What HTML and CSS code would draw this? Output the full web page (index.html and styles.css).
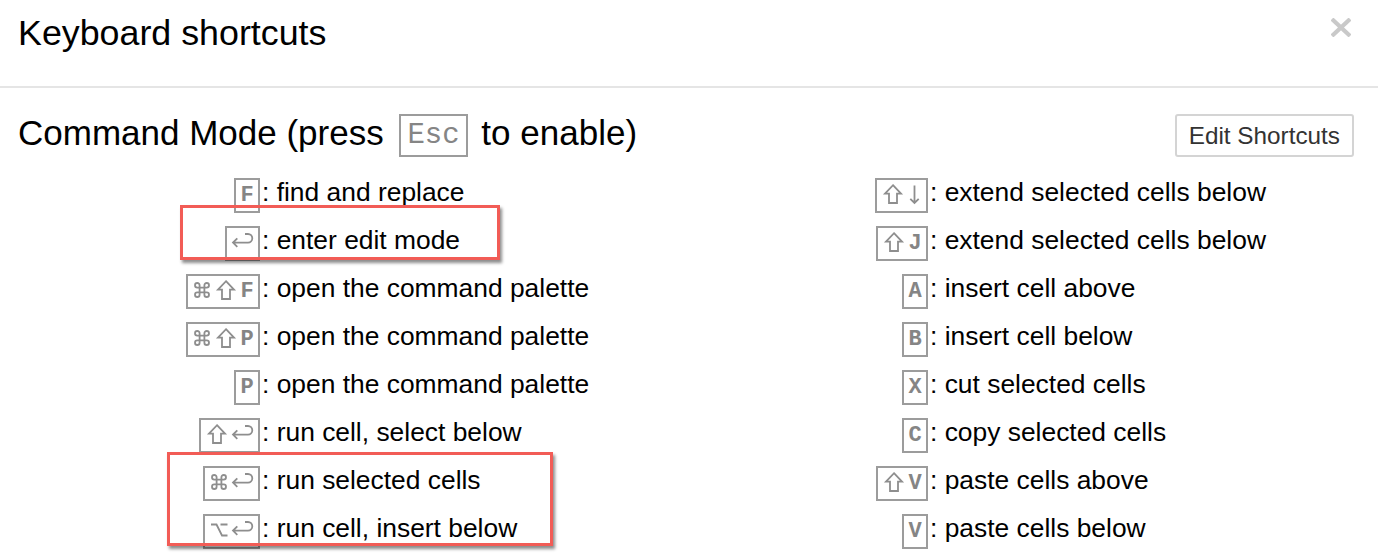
FILE: index.html
```html
<!DOCTYPE html>
<html>
<head>
<meta charset="utf-8">
<title>Keyboard shortcuts</title>
<link rel="stylesheet" href="styles.css">
</head>
<body>
<svg class="defs" width="0" height="0" aria-hidden="true">
  <defs>
    <symbol id="i-cmd" viewBox="0 0 22 24"><path d="M8.6 7.3V16.7M13.4 7.3V16.7M6.3 9.6H15.7M6.3 14.4H15.7M8.6 7.3A2.3 2.3 0 1 0 6.3 9.6M13.4 7.3A2.3 2.3 0 1 1 15.7 9.6M8.6 16.7A2.3 2.3 0 1 1 6.3 14.4M13.4 16.7A2.3 2.3 0 1 0 15.7 14.4"/></symbol>
    <symbol id="i-shift" viewBox="0 0 26 24"><path d="M13 3.2L21 11.6H17V21H9V11.6H5Z"/></symbol>
    <symbol id="i-ret" viewBox="0 0 25 24"><path d="M15 4H18A4.3 4.3 0 0 1 18 12.6H3M7.3 8.3L3 12.6L7.3 16.9"/></symbol>
    <symbol id="i-opt" viewBox="0 0 22 24"><path d="M3 6.5H8.5L14 17.5H19.5M12.5 6.5H19.5"/></symbol>
    <symbol id="i-down" viewBox="0 0 17 24"><path d="M8.5 3.5V21M4.3 16.8L8.5 21L12.7 16.8"/></symbol>
  </defs>
</svg>
<div class="modal">
  <div class="modal-header">
    <h4 class="modal-title">Keyboard shortcuts</h4>
    <button class="close" aria-label="Close">
      <svg width="20" height="19" viewBox="0 0 20 19"><path d="M2.5 2.5 L17.5 16.5 M17.5 2.5 L2.5 16.5" stroke="#c9c9c9" stroke-width="4.2" stroke-linecap="square"/></svg>
    </button>
  </div>
  <div class="modal-body">
    <div class="section-head">
      <h4 class="section-title">Command Mode (press <kbd class="esc">Esc</kbd> to enable)</h4>
      <button class="btn">Edit Shortcuts</button>
    </div>
    <div class="cols">
      <div class="col">
        <div class="row"><span class="key"><kbd><span class="l">F</span></kbd></span>: find and replace</div>
        <div class="row"><span class="key"><kbd><svg class="s ret"><use href="#i-ret"/></svg></kbd></span>: enter edit mode</div>
        <div class="row"><span class="key"><kbd><svg class="s cmd"><use href="#i-cmd"/></svg><svg class="s sh"><use href="#i-shift"/></svg><span class="l">F</span></kbd></span>: open the command palette</div>
        <div class="row"><span class="key"><kbd><svg class="s cmd"><use href="#i-cmd"/></svg><svg class="s sh"><use href="#i-shift"/></svg><span class="l">P</span></kbd></span>: open the command palette</div>
        <div class="row"><span class="key"><kbd><span class="l">P</span></kbd></span>: open the command palette</div>
        <div class="row"><span class="key"><kbd><svg class="s sh"><use href="#i-shift"/></svg><svg class="s ret"><use href="#i-ret"/></svg></kbd></span>: run cell, select below</div>
        <div class="row"><span class="key"><kbd><svg class="s cmd"><use href="#i-cmd"/></svg><svg class="s ret"><use href="#i-ret"/></svg></kbd></span>: run selected cells</div>
        <div class="row"><span class="key"><kbd><svg class="s cmd"><use href="#i-opt"/></svg><svg class="s ret"><use href="#i-ret"/></svg></kbd></span>: run cell, insert below</div>
      </div>
      <div class="col">
        <div class="row"><span class="key"><kbd><svg class="s sh"><use href="#i-shift"/></svg><svg class="s dn"><use href="#i-down"/></svg></kbd></span>: extend selected cells below</div>
        <div class="row"><span class="key"><kbd><svg class="s sh"><use href="#i-shift"/></svg><span class="l">J</span></kbd></span>: extend selected cells below</div>
        <div class="row"><span class="key"><kbd><span class="l">A</span></kbd></span>: insert cell above</div>
        <div class="row"><span class="key"><kbd><span class="l">B</span></kbd></span>: insert cell below</div>
        <div class="row"><span class="key"><kbd><span class="l">X</span></kbd></span>: cut selected cells</div>
        <div class="row"><span class="key"><kbd><span class="l">C</span></kbd></span>: copy selected cells</div>
        <div class="row"><span class="key"><kbd><svg class="s sh"><use href="#i-shift"/></svg><span class="l">V</span></kbd></span>: paste cells above</div>
        <div class="row"><span class="key"><kbd><span class="l">V</span></kbd></span>: paste cells below</div>
      </div>
    </div>
  </div>
  <div class="mark mark-1"></div>
  <div class="mark mark-2"></div>
</div>
</body>
</html>
```

FILE: styles.css
```css
html, body {
  margin: 0;
  padding: 0;
  background: #fff;
}
body {
  font-family: "Liberation Sans", Arial, Helvetica, sans-serif;
  color: #000;
  width: 1378px;
  height: 556px;
  overflow: hidden;
}
.defs {
  position: absolute;
  width: 0;
  height: 0;
  overflow: hidden;
}
.modal {
  position: relative;
  width: 1378px;
  height: 556px;
}
.modal-header {
  position: relative;
  height: 86px;
  box-sizing: content-box;
  padding: 0 18px;
  border-bottom: 2px solid #e5e5e5;
}
.modal-title {
  margin: 0;
  padding-top: 13px;
  font-size: 35.8px;
  line-height: 40px;
  font-weight: normal;
}
.close {
  position: absolute;
  left: 1331px;
  top: 18px;
  margin: 0;
  padding: 0;
  border: 0;
  background: none;
  width: 20px;
  height: 19px;
  line-height: 0;
}
.modal-body {
  padding: 23px 24px 0 18px;
}
.section-head {
  display: flex;
  justify-content: space-between;
  align-items: flex-start;
}
.section-title {
  margin: 0;
  font-size: 35px;
  line-height: 44px;
  font-weight: normal;
  white-space: nowrap;
}
kbd {
  display: inline-block;
  box-sizing: border-box;
  height: 35px;
  line-height: 31px;
  margin: 0 2px;
  padding: 0 3px;
  border: 2px solid #9c9c9c;
  font-family: "Liberation Mono", "Courier New", monospace;
  font-size: 22px;
  color: #858585;
  background: #fff;
  white-space: nowrap;
}
kbd.esc {
  height: 43px;
  line-height: 39px;
  padding: 0 6px;
  font-size: 29px;
  margin: 0 4px 0 6px;
  vertical-align: 2px;
}
.btn {
  margin-top: 3px;
  height: 43px;
  padding: 0 12px;
  border: 2px solid #d4d4d4;
  border-radius: 3px;
  background: #fff;
  color: #333;
  font-family: "Liberation Sans", Arial, sans-serif;
  font-size: 24.3px;
  line-height: 39px;
}
.cols {
  display: grid;
  grid-template-columns: 1fr 1fr;
  margin-top: 11px;
}
.row {
  height: 48px;
  line-height: 48px;
  font-size: 26.4px;
  white-space: nowrap;
}
.key {
  display: inline-block;
  width: 244px;
  text-align: right;
}
.l {
  display: inline-block;
  width: 15.6px;
  text-align: center;
  font-weight: bold;
}
.s {
  display: inline-block;
  height: 24px;
  vertical-align: -5px;
  fill: none;
  stroke: #8e8e8e;
  stroke-width: 1.8;
  stroke-linejoin: miter;
}
.cmd { width: 22px; }
.sh { width: 26px; }
.ret { width: 25px; }
.dn { width: 17px; }
.mark {
  position: absolute;
  box-sizing: border-box;
  border: 3px solid #f25c56;
  box-shadow: 2px 3px 3px rgba(0, 0, 0, 0.45);
}
.mark-1 {
  left: 180px;
  top: 205px;
  width: 320px;
  height: 55px;
}
.mark-2 {
  left: 167px;
  top: 452px;
  width: 386px;
  height: 94px;
}
```
